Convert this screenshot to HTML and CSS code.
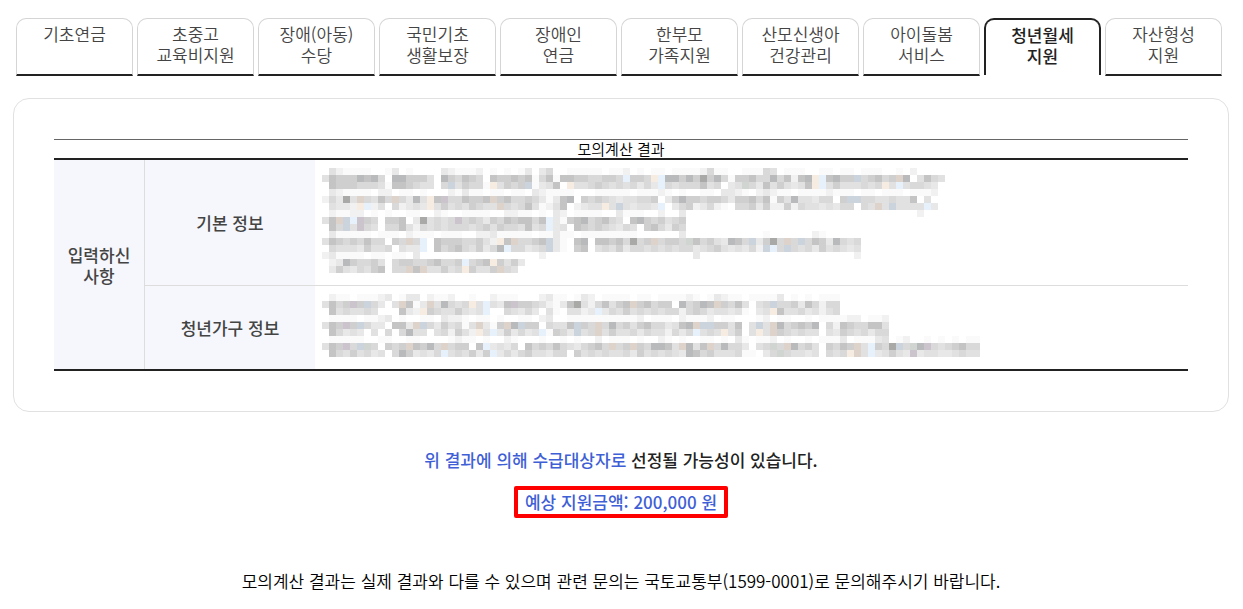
FILE: index.html
```html
<!DOCTYPE html>
<html lang="ko">
<head>
    <meta charset="UTF-8">
    <meta name="viewport" content="width=device-width, initial-scale=1.0">
    <title>모의계산 결과</title>
    <link rel="stylesheet" href="styles.css">
</head>
<body>
    <div class="wrap">
        <nav class="tabs">
            <a href="#" class="tab">기초연금</a>
            <a href="#" class="tab">초중고<br>교육비지원</a>
            <a href="#" class="tab">장애(아동)<br>수당</a>
            <a href="#" class="tab">국민기초<br>생활보장</a>
            <a href="#" class="tab">장애인<br>연금</a>
            <a href="#" class="tab">한부모<br>가족지원</a>
            <a href="#" class="tab">산모신생아<br>건강관리</a>
            <a href="#" class="tab">아이돌봄<br>서비스</a>
            <a href="#" class="tab active" aria-current="page">청년월세<br>지원</a>
            <a href="#" class="tab">자산형성<br>지원</a>
        </nav>

        <section class="result-box">
            <table class="result-table">
                <caption>모의계산 결과</caption>
                <colgroup>
                    <col class="col-group">
                    <col class="col-name">
                    <col>
                </colgroup>
                <tbody>
                    <tr>
                        <th class="group" rowspan="2" scope="rowgroup">입력하신<br>사항</th>
                        <th scope="row">기본 정보</th>
                        <td><svg class="mosaic" id="basicInfo" aria-hidden="true"></svg></td>
                    </tr>
                    <tr>
                        <th scope="row">청년가구 정보</th>
                        <td><svg class="mosaic" id="familyInfo" aria-hidden="true"></svg></td>
                    </tr>
                </tbody>
            </table>
        </section>

        <div class="summary">
            <p class="message"><em>위 결과에 의해 수급대상자로</em> 선정될 가능성이 있습니다.</p>
            <p class="amount">예상 지원금액: 200,000 원</p>
        </div>
        <p class="notice">모의계산 결과는 실제 결과와 다를 수 있으며 관련 문의는 국토교통부(1599-0001)로 문의해주시기 바랍니다.</p>
    </div>

    <script>
        // 개인정보 모자이크: 글자 하나가 한 칸
        const CELL = 7;
        const COLORS = {
            1: '#fafafa', 2: '#f1f1f1', 3: '#e8e8e8', 4: '#e1e1e1', 5: '#d9d9da',
            6: '#cfcfcf', 7: '#c4c4c4', 8: '#b9babb', 9: '#a9a9a8',
            o: '#f6ece2', t: '#ddd3ca', b: '#e6f1fb', s: '#cbd4dd', p: '#cbc4cc', g: '#d1d5d1'
        };

        const basicInfo = [
            '.421111..13.1....321112.1.1.13.35..11111.112.1.11.11112511..11154.111..11.11.111..1.2',
            '476668785.886664.865765.7667671571776655665b665ob886869685166755857278ob7866s56756t8.4754',
            '.766655541776544.5s46551o4656s1347.o445654545353b54555745.34g537464347ob46444545o4b45543',
            '.321111.22.11.1...21311.11.11.321111...11111.11121.1..11.3321.23211.11112111.11.111.1112',
            '25394t5475t5384o7p557667t67556531378.65654344556.368665665366757164844355.6ss55445447.4',
            '.4332ob24.52343o464546544t545741247.2344o4s43443b.35623521.55636226254434355.54t4s4444b3',
            '.21122.1.1..11..21..1111..2211.1.32.1111..3111..2..3.................................2.',
            '47tsbp65.667.394545p565365767757b3167856754.78656456',
            '.75s4p54.55742545455545646554745b34.765654354.675365',
            '.311111.111.2111.111..22311111.11311.11111111......3...........1......21.....',
            '476565755.65t5b.766655642o7t5567s31.78.77675956t5665g75643875s3695t5s57638545',
            '.544436445.433b.7567546358b55345s31.67.454635545454553456434352sb5s5453645434',
            '231111.11.11.3.................2.....................3......................2',
            '.23865564.5665567556b567o6463',
            '.36435467.55t7t44645o6446t54'
        ];

        const familyInfo = [
            '.211.11123.133.2112..1..2111...2311.132.1111.11.111121.13211.11113.1.1.111',
            '4756p6s53.4t713t48545o4b437p6654213794257467t67566.85687t6574.45s556375255',
            '.7454454...732o65446434b..54353.41.4423b354645454552565344341.34o744534245',
            '.1111.1123.1..11.3221.11.1..11.23..11111111112.111.21112.11...12.11..1.111122.112',
            '476p6s533.773ts5364514t316t8s66.5447s65t5856467553478tss6647.4s4t856768.527655774',
            '.75343.4.5.5844.452642o4b363534b1653s45t4644535442535b454o46.4o4t654544.436545355',
            '.11111..11..11....1211.1..21...1..1.1..2.111.1..21.1..11.1.31.112.1..1.1113.11134.12..1.1.1.11',
            '476p5sg5.656t7685t566.7b3435.756575435675t56t658874t847t58553.45g5t8564.6576t4b659s5g8p5456755',
            '.75464534.5863435b454636b3535644355.64545445364545438756444511.35g54434.545ot4b34643p344334544'
        ];

        function drawMosaic(id, rows) {
            const svg = document.getElementById(id);
            const columns = Math.max(...rows.map(row => row.length));
            svg.setAttribute('width', columns * CELL);
            svg.setAttribute('height', rows.length * CELL);
            let out = '';
            rows.forEach((row, y) => {
                [...row].forEach((key, x) => {
                    if (COLORS[key]) {
                        out += `<rect x="${x * CELL}" y="${y * CELL}" width="${CELL}" height="${CELL}" fill="${COLORS[key]}"/>`;
                    }
                });
            });
            svg.innerHTML = out;
        }

        drawMosaic('basicInfo', basicInfo);
        drawMosaic('familyInfo', familyInfo);
    </script>
</body>
</html>
```

FILE: styles.css
```css
* {
    box-sizing: border-box;
}

body {
    margin: 0;
    background: #fff;
    color: #222;
    font-family: "Noto Sans CJK KR", sans-serif;
    font-size: 17px;
    line-height: 21px;
}

p {
    margin: 0;
}

.wrap {
    padding: 18px 14px 0 13px;
}

/* 탭 */
.tabs {
    display: grid;
    grid-template-columns: repeat(10, 1fr);
    gap: 4px;
    padding: 0 7px 0 3px;
}

.tab {
    height: 58px;
    padding-top: 4px;
    border: 1px solid #d5d5d5;
    border-bottom: 2px solid #222;
    border-radius: 10px 10px 0 0;
    color: #444;
    font-weight: 350;
    text-align: center;
    text-decoration: none;
    white-space: nowrap;
}

.tab.active {
    height: 57px;
    border: 2px solid #222;
    border-bottom: none;
    color: #222;
    font-weight: 500;
}

/* 결과 표 */
.result-box {
    margin-top: 22px;
    padding: 40px;
    border: 1px solid #e1e1e1;
    border-radius: 16px;
}

.result-table {
    width: 100%;
    table-layout: fixed;
    border-spacing: 0;
    border-top: 2px solid #222;
    border-bottom: 2px solid #222;
}

.result-table caption {
    height: 19px;
    border-top: 1px solid #666;
    color: #000;
    font-size: 15px;
    font-weight: 350;
    line-height: 18px;
}

.col-group {
    width: 91px;
}

.col-name {
    width: 170px;
}

.result-table th {
    padding: 0;
    background: #f6f7fd;
    color: #444;
    font-weight: 500;
}

.result-table .group {
    border-right: 1px solid #ddd;
}

.result-table td {
    padding: 8px 7px 12px;
}

.result-table tr:first-child th:not(.group),
.result-table tr:first-child td {
    border-bottom: 1px solid #ddd;
}

.mosaic {
    display: block;
}

/* 결과 안내 */
.summary {
    display: flex;
    flex-direction: column;
    align-items: center;
    gap: 16px;
    margin-top: 37px;
    font-weight: 500;
}

.message em {
    color: #3f5fd6;
    font-style: normal;
}

.amount {
    padding: 1px 7px 2px;
    border: 4px solid #f00;
    border-radius: 2px;
    color: #3f5fd6;
}

.notice {
    margin-top: 52px;
    color: #000;
    font-weight: 350;
    text-align: center;
}
```
